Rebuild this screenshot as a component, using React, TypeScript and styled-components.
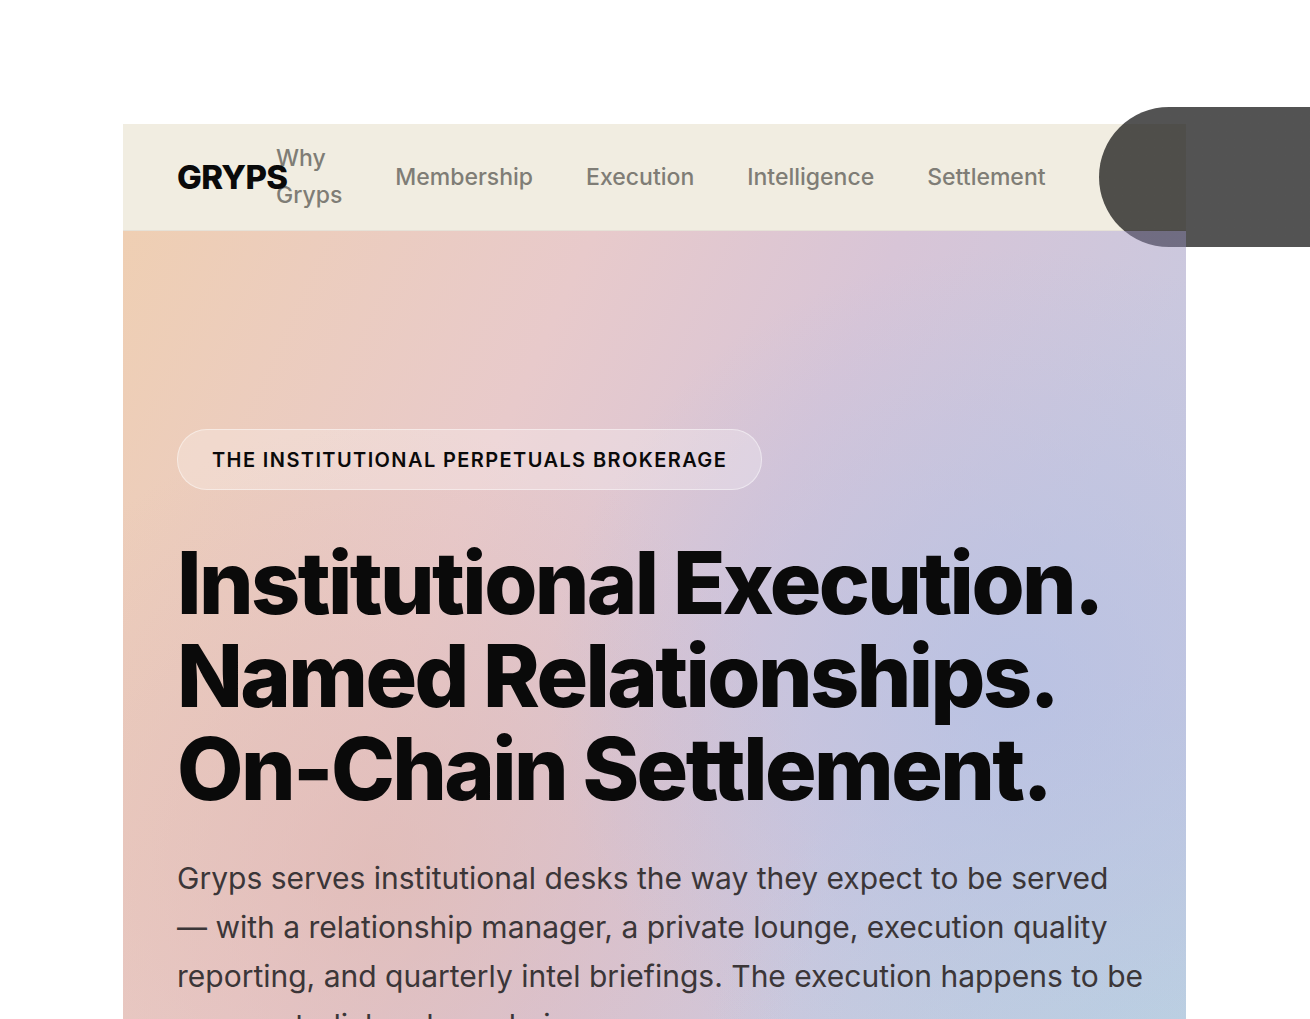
import React from "react";
import styled, { createGlobalStyle } from "styled-components";

const GlobalStyle = createGlobalStyle`
  *, *::before, *::after { box-sizing: border-box; }
  body {
    margin: 0;
    background: #ffffff;
    color: #0a0a0a;
    font-family: Inter, "Liberation Sans", sans-serif;
  }
`;

const Page = styled.div`
  display: flex;
  flex-direction: column;
  height: 100vh;
  padding: 124px 124px 0 123px;
  overflow: hidden;
`;

const Header = styled.header`
  position: relative;
  z-index: 1;
  display: flex;
  flex: none;
  align-items: center;
  height: 107px;
  padding: 0 54px;
  background: #f1ede1;
  border-bottom: 1px solid #e6e1d7;
`;

const Logo = styled.a`
  position: relative;
  z-index: 1;
  flex: none;
  width: 99px;
  color: #0a0a0a;
  font-size: 33px;
  font-weight: 800;
  letter-spacing: -0.02em;
  line-height: 40px;
  text-decoration: none;
`;

const Nav = styled.nav`
  display: flex;
  flex: 1;
  align-items: center;
  gap: 53px;
  min-width: 0;
`;

const NavLink = styled.a`
  color: #7f7d76;
  font-size: 23px;
  font-weight: 500;
  line-height: 37px;
  text-decoration: none;
`;

const PillLink = styled.a`
  flex: 0 0 320px;
  height: 140px;
  border-radius: 70px;
  background:
    linear-gradient(rgba(10, 10, 10, 0.7), rgba(10, 10, 10, 0.7)) 0 0 / 100% 124px no-repeat,
    linear-gradient(rgba(20, 18, 40, 0.5), rgba(20, 18, 40, 0.5)) 0 100% / 87px 16px no-repeat,
    linear-gradient(rgba(10, 10, 10, 0.7), rgba(10, 10, 10, 0.7)) 100% 100% / calc(100% - 87px) 16px no-repeat;
`;

const Hero = styled.main`
  display: flex;
  flex: 1 0 auto;
  flex-direction: column;
  align-items: flex-start;
  padding: 198px 40px 60px 54px;
  background:
    radial-gradient(ellipse 44% 50% at 84% 52%, rgba(180, 192, 228, 0.75), rgba(184, 194, 228, 0) 100%),
    radial-gradient(ellipse 46% 50% at 100% 100%, rgba(184, 212, 226, 0.9), rgba(184, 212, 226, 0) 100%),
    radial-gradient(ellipse 42% 50% at 24% 72%, rgba(224, 184, 176, 0.65), rgba(224, 184, 176, 0) 100%),
    linear-gradient(115deg, #efcfb3 0%, #e8cacb 32%, #d8c5d7 53%, #cbc8de 74%, #c5c9e0 100%);
`;

const Badge = styled.p`
  margin: 0;
  padding: 1px 34px 0;
  border: 1px solid rgba(255, 255, 255, 0.45);
  border-radius: 30px;
  background: rgba(255, 255, 255, 0.25);
  font-size: 20px;
  font-weight: 600;
  letter-spacing: 0.07em;
  line-height: 58px;
`;

const Title = styled.h1`
  margin: 47px 0 0;
  font-size: 86px;
  font-weight: 800;
  letter-spacing: -0.03em;
  line-height: 93px;
`;

const TitleLine = styled.span`
  display: block;
  white-space: nowrap;
`;

const Lead = styled.p`
  margin: 38px 0 0;
  color: #3b3638;
  font-size: 30px;
  line-height: 49px;
`;

const links = ["Why Gryps", "Membership", "Execution", "Intelligence", "Settlement"];
const titleLines = ["Institutional Execution.", "Named Relationships.", "On-Chain Settlement."];

export default function App() {
  return (
    <>
      <GlobalStyle />
      <Page>
        <Header>
          <Logo href="#">GRYPS</Logo>
          <Nav>
            {links.map((label) => (
              <NavLink key={label} href="#">
                {label}
              </NavLink>
            ))}
            <PillLink href="#" aria-label="Membership" />
          </Nav>
        </Header>
        <Hero>
          <Badge>THE INSTITUTIONAL PERPETUALS BROKERAGE</Badge>
          <Title>
            {titleLines.map((line) => (
              <TitleLine key={line}>{line}</TitleLine>
            ))}
          </Title>
          <Lead>
            Gryps serves institutional desks the way they expect to be served — with a relationship
            manager, a private lounge, execution quality reporting, and quarterly intel briefings.
            The execution happens to be non-custodial and on-chain.
          </Lead>
        </Hero>
      </Page>
    </>
  );
}
